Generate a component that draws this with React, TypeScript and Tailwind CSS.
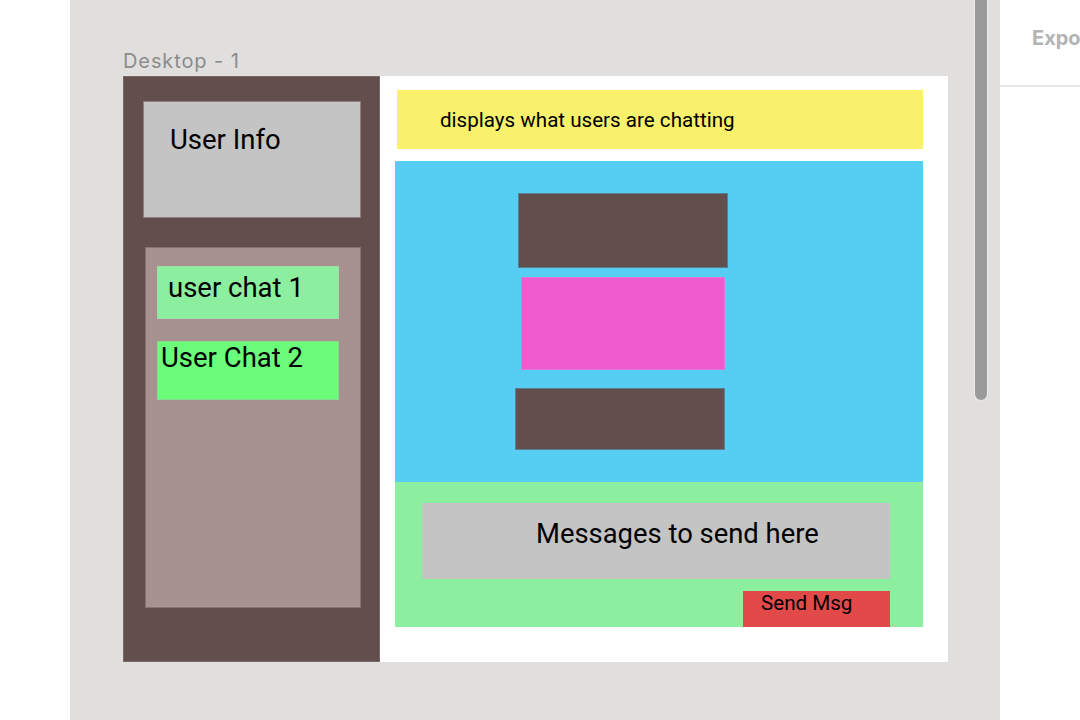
export default function App() {
  return (
    <div
      className="flex h-[720px] w-[1080px] overflow-hidden bg-white"
      style={{ fontFamily: 'Roboto, "Noto Sans", sans-serif' }}
    >
      {/* left white gutter */}
      <div className="w-[70px] shrink-0 bg-white" />

      {/* canvas */}
      <div className="relative flex w-[930px] shrink-0 flex-col bg-[#e0dfdd] pl-[53px] pt-[46px]">
        <div className="h-[30px] font-['Inter',sans-serif] text-[20px] leading-[30px] tracking-[0.9px] text-[#8c8c8c]">
          Desktop - 1
        </div>

        {/* frame */}
        <div className="flex h-[586px] w-[825px]">
          {/* sidebar */}
          <div className="flex w-[257px] shrink-0 flex-col border border-[#7a6867] bg-[#624e4d]">
            <div className="ml-[19px] mt-[24px] h-[117px] w-[218px] border border-[#8e7f7e] bg-[#c4c4c4] pl-[26px] pt-[20px] text-[27.5px] leading-[36px] text-black">
              User Info
            </div>
            <div className="ml-[21px] mt-[29px] flex h-[361px] w-[216px] flex-col gap-[22px] border border-[#8a7271] bg-[#a79290] pl-[11px] pt-[18px]">
              <div className="h-[53px] w-[182px] border border-[#9fdcab] bg-[#8cef9f] pl-[10px] pt-[3px] text-[27.5px] leading-[36px] text-black">
                user chat 1
              </div>
              <div className="h-[59px] w-[182px] border border-[#8ad893] bg-[#6bfd7a] pl-[3px] text-[27.5px] leading-[32px] text-black">
                User Chat 2
              </div>
            </div>
          </div>

          {/* main area */}
          <div className="flex w-[568px] flex-col bg-white pt-[14px]">
            <div className="ml-[17px] flex h-[59px] w-[526px] items-center bg-[#f9f06b] pl-[43px] pt-[2px] text-[20.6px] text-black">
              displays what users are chatting
            </div>
            <div className="ml-[15px] mt-[12px] flex h-[321px] w-[528px] flex-col bg-[#56cdf2] pt-[32px]">
              <div className="ml-[123px] h-[75px] w-[210px] border border-[#5b7f8f] bg-[#624e4d]" />
              <div className="ml-[126px] mt-[9px] h-[93px] w-[204px] border border-[#d77ad8] bg-[#f05acf]" />
              <div className="ml-[120px] mt-[18px] h-[62px] w-[210px] border border-[#5b7f8f] bg-[#624e4d]" />
            </div>
            <div className="ml-[15px] flex h-[145px] w-[528px] flex-col bg-[#8cef9f] pt-[21px]">
              <div className="ml-[27px] flex h-[76px] w-[468px] items-start bg-[#c4c4c4] pl-[114px] pt-[14px] text-[27.4px] leading-[34px] text-black">
                Messages to send here
              </div>
              <div className="ml-[348px] mt-[12px] h-[36px] w-[147px] bg-[#e24a4a] pl-[18px] text-[20.6px] leading-[24px] text-black">
                Send Msg
              </div>
            </div>
          </div>
        </div>

        {/* scrollbar */}
        <div className="absolute right-[12px] top-0 h-[401px] w-[14px] rounded-b-full border-x border-b border-[#ebeaea] bg-[#9b9a9a]" />
      </div>

      {/* right panel */}
      <div className="flex min-w-0 flex-1 flex-col overflow-hidden bg-white">
        <div className="h-[87px] whitespace-nowrap border-b-2 border-[#e5e5e5] pl-[32px] pt-[25px] font-['Inter',sans-serif] text-[20px] font-bold leading-[26px] text-[#b3b3b3]">
          Export
        </div>
      </div>
    </div>
  )
}
